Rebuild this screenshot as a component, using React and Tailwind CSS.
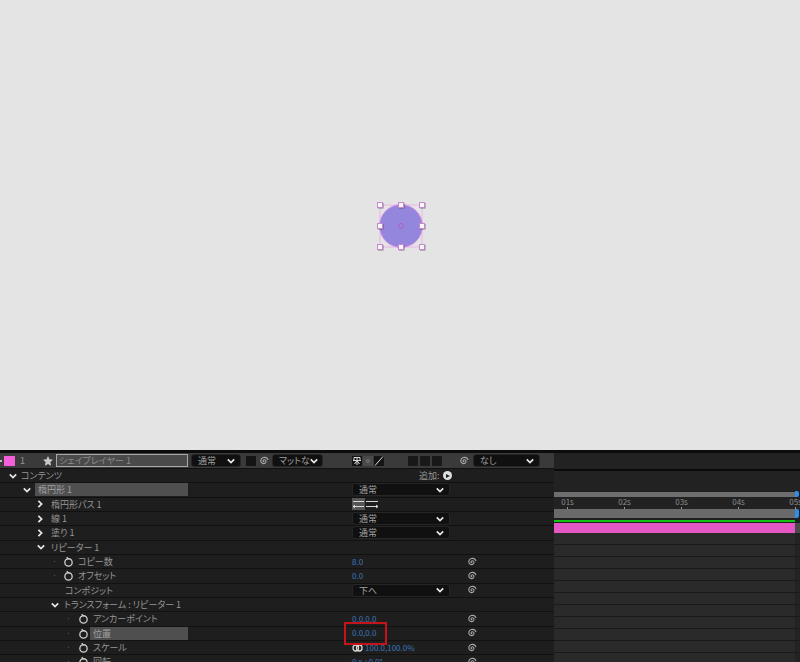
const Chevron = ({ open = true, className = '' }) => (
  <svg className={`w-[8px] h-[8px] shrink-0 ${className}`} viewBox="0 0 10 10" fill="none" stroke="#e6e6e6" strokeWidth="2.2">
    <path d={open ? 'M1 3l4 4 4-4' : 'M3 1l4 4-4 4'} />
  </svg>
);

const Spiral = ({ className = '' }) => (
  <svg className={`w-[10px] h-[10px] shrink-0 ${className}`} viewBox="0 0 12 12" fill="none" stroke="#a8a8a8" strokeWidth="1.3">
    <path d="M6.500 6.800c-1 .4-1.900-.4-1.600-1.300.4-1.100 2-1.300 2.800-.5 1.100 1 .8 2.900-.5 3.700-1.700 1-3.900.3-4.700-1.500-.9-2.200.4-4.600 2.700-5.300 2.300-.7 4.800.6 5.600 2.900" />
  </svg>
);

const Stopwatch = () => (
  <svg className="w-[11px] h-[11px] shrink-0" viewBox="0 0 12 12" fill="none" stroke="#d0d0d0" strokeWidth="1.4">
    <circle cx="6" cy="7" r="4" />
    <path d="M4 1.200l2.400 2.200" />
  </svg>
);

const Dropdown = ({ label, className = '' }) => (
  <div className={`h-[13px] rounded-[3px] bg-[#101010] border border-[#262626] flex items-center justify-between pl-[6px] pr-[5px] text-[#a0a0a0] whitespace-nowrap ${className}`}>
    <span>{label}</span>
    <Chevron />
  </div>
);

const Dot = ({ className = '' }) => <span className={`w-[1px] h-[1px] bg-[#555] shrink-0 ${className}`} />;

const Blue = ({ children }) => <span className="text-[8px] text-[#3a76bc] whitespace-nowrap">{children}</span>;

const Row = ({ name, mid, expr = false }) => (
  <div className="h-[14.33px] flex items-center border-b border-[#111] bg-[#1e1e1e]">
    <div className="w-[352px] shrink-0 flex items-center">{name}</div>
    <div className="w-[115px] shrink-0 flex items-center">{mid}</div>
    {expr && <Spiral />}
  </div>
);

const Label = ({ children, pad }) => (
  <span className={`text-[#969696] whitespace-nowrap ${pad}`}>{children}</span>
);

const Square = () => <span className="w-[10px] h-[10px] bg-[#181818] rounded-[1px]" />;

export default function App() {
  return (
    <div className="w-[800px] h-[662px] overflow-hidden bg-[#1e1e1e] text-[9px] leading-none [font-feature-settings:'palt']" style={{ fontFamily: '"Noto Sans CJK JP", "Liberation Sans", sans-serif' }}>
      {/* composition view */}
      <div className="h-[450px] bg-[#e4e4e4] flex justify-center pt-[199px] pl-[2px]">
        <svg className="w-[54px] h-[54px]" viewBox="0 0 54 54">
          <rect x="6" y="6" width="42" height="42" fill="none" stroke="#eab4ea" strokeWidth="1" />
          <circle cx="27" cy="27" r="21.500" fill="#9486dc" stroke="#dc94e4" strokeWidth="0.8" />
          <path d="M27 24l3 3-3 3-3-3z" fill="none" stroke="#b060b8" strokeWidth="1" />
          {[[6, 6], [27, 6], [48, 6], [6, 27], [48, 27], [6, 48], [27, 48], [48, 48]].map(([x, y]) => (
            <g key={`${x}-${y}`}>
              <rect x={x - 2} y={y - 2} width="5.500" height="5.500" fill="#4a3a4a" opacity="0.6" />
              <rect x={x - 2.5} y={y - 2.500} width="5" height="5" fill="#fbf6fb" stroke="#c48acc" strokeWidth="1" />
            </g>
          ))}
        </svg>
      </div>

      <div className="h-[212px] flex border-t-[3px] border-[#0c0c0c]">
        {/* layer panel */}
        <div className="relative w-[554px] shrink-0 overflow-hidden">
          <div className="h-[16px] bg-[#3a3a3a] flex items-center border-b border-[#111]">
            <span className="w-[2px] h-[2px] bg-[#bbb]" />
            <span className="ml-[2px] w-[11px] h-[10px] bg-[#f35fd8]" />
            <span className="ml-[5px] w-[23px] text-[#969696]">1</span>
            <svg className="w-[10px] h-[10px]" viewBox="0 0 10 10" fill="#c8c8c8">
              <path d="M5 0l1.500 3.300 3.500.4-2.600 2.400.7 3.600L5 7.900 1.900 9.700l.7-3.600L0 3.700l3.500-.4z" />
            </svg>
            <div className="ml-[3px] w-[132px] h-[13px] bg-[#4a4a4a] border border-[#a8a8a8] flex items-center pl-[2px] text-[#8a8a8a] whitespace-nowrap">シェイプレイヤー 1</div>
            <Dropdown label="通常" className="ml-[3px] w-[50px]" />
            <span className="ml-[5px] w-[10px] h-[10px] bg-[#141414]" />
            <Spiral className="ml-[3px]" />
            <Dropdown label="マットな" className="ml-[3px] w-[51px]" />
            <div className="ml-[29px] flex gap-[1px]">
              <svg className="w-[10px] h-[10px] bg-[#141414]" viewBox="0 0 10 10" fill="none" stroke="#d8d8d8" strokeWidth="1">
                <path d="M1 4.500h8M2 4.500V1.500h6v3M5 1.500V9M2.500 8l2.500-3.500L7.500 8" />
              </svg>
              <span className="w-[10px] h-[10px] bg-[#4a4a4a] flex items-center justify-center">
                <span className="w-[4px] h-[4px] rounded-full border border-[#777]" />
              </span>
              <svg className="w-[10px] h-[10px] bg-[#141414]" viewBox="0 0 10 10" fill="none" stroke="#e0e0e0" strokeWidth="1">
                <path d="M1 9.500L9 .5" />
              </svg>
            </div>
            <div className="ml-[24px] flex gap-[2px]">
              <Square />
              <Square />
              <Square />
            </div>
            <Spiral className="ml-[17px]" />
            <Dropdown label="なし" className="ml-[4px] w-[67px]" />
          </div>

          <Row
            name={<><Chevron className="ml-[9px]" /><Label pad="ml-[4px]">コンテンツ</Label></>}
            mid={<span className="ml-[67px] flex items-center gap-[3px] whitespace-nowrap text-[#969696]">追加:<span className="w-[9px] h-[9px] rounded-full bg-[#e0e0e0] flex items-center justify-center"><span className="w-0 h-0 border-y-[2.500px] border-y-transparent border-l-[4px] border-l-[#1e1e1e] ml-[1px]" /></span></span>}
          />
          <Row
            name={<><Chevron className="ml-[23px]" /><div className="ml-[4px] w-[153px] h-[13px] bg-[#4f4f4f] flex items-center pl-[3px] text-[#a0a0a0]">楕円形 1</div></>}
            mid={<Dropdown label="通常" className="w-[98px]" />}
          />
          <Row
            name={<><Chevron open={false} className="ml-[36px]" /><Label pad="ml-[7px]">楕円形パス 1</Label></>}
            mid={
              <div className="flex gap-[1px]">
                <svg className="w-[13px] h-[12px] bg-[#555]" viewBox="0 0 13 12" fill="none" stroke="#d8d8d8" strokeWidth="1">
                  <path d="M1 3.500h11M1 8.500h11" />
                  <path d="M1 8.500l2-1.500M1 8.500l2 1.500" />
                </svg>
                <svg className="w-[12px] h-[12px]" viewBox="0 0 12 12" fill="none" stroke="#d8d8d8" strokeWidth="1">
                  <path d="M0 3.500h12M0 8.500h12" />
                  <path d="M12 8.500l-2-1.500M12 8.500l-2 1.500" />
                </svg>
              </div>
            }
          />
          <Row name={<><Chevron open={false} className="ml-[36px]" /><Label pad="ml-[7px]">線 1</Label></>} mid={<Dropdown label="通常" className="w-[98px]" />} />
          <Row name={<><Chevron open={false} className="ml-[36px]" /><Label pad="ml-[7px]">塗り 1</Label></>} mid={<Dropdown label="通常" className="w-[98px]" />} />
          <Row name={<><Chevron className="ml-[37px]" /><Label pad="ml-[6px]">リピーター 1</Label></>} />
          <Row expr name={<><Dot className="ml-[54px]" /><span className="ml-[8px]"><Stopwatch /></span><Label pad="ml-[4px]">コピー数</Label></>} mid={<Blue>8.0</Blue>} />
          <Row expr name={<><Dot className="ml-[54px]" /><span className="ml-[8px]"><Stopwatch /></span><Label pad="ml-[4px]">オフセット</Label></>} mid={<Blue>0.0</Blue>} />
          <Row expr name={<><Label pad="ml-[65px]">コンポジット</Label></>} mid={<Dropdown label="下へ" className="w-[98px]" />} />
          <Row name={<><Chevron className="ml-[51px]" /><Label pad="ml-[5px]">トランスフォーム : リピーター 1</Label></>} />
          <Row expr name={<><Dot className="ml-[68px]" /><span className="ml-[9px]"><Stopwatch /></span><Label pad="ml-[4px]">アンカーポイント</Label></>} mid={<Blue>0.0,0.0</Blue>} />
          <Row
            expr
            name={<><Dot className="ml-[68px]" /><span className="ml-[9px]"><Stopwatch /></span><div className="ml-[1px] w-[98px] h-[13px] bg-[#4f4f4f] flex items-center pl-[3px] text-[#a0a0a0]">位置</div></>}
            mid={<Blue>0.0,0.0</Blue>}
          />
          <Row
            expr
            name={<><Dot className="ml-[68px]" /><span className="ml-[9px]"><Stopwatch /></span><Label pad="ml-[4px]">スケール</Label></>}
            mid={
              <span className="flex items-center gap-[2px]">
                <svg className="w-[11px] h-[8px]" viewBox="0 0 11 8" fill="none" stroke="#d8d8d8" strokeWidth="1.300">
                  <rect x="1" y="1" width="5.500" height="6" rx="2.700" />
                  <rect x="4.500" y="1" width="5.500" height="6" rx="2.700" />
                </svg>
                <Blue>100.0,100.0%</Blue>
              </span>
            }
          />
          <Row expr name={<><Dot className="ml-[68px]" /><span className="ml-[9px]"><Stopwatch /></span><Label pad="ml-[4px]">回転</Label></>} mid={<Blue>0 x +0.0°</Blue>} />

          {/* red highlight over the position value */}
          <div className="absolute left-[344px] top-[169px] w-[43px] h-[23px] border-[2px] border-[#c4141a]" />
        </div>

        {/* timeline */}
        <div className="flex-1 min-w-0 overflow-hidden bg-[#1f1f1f]">
          <div className="h-[18px] bg-[#222] border-b-2 border-[#0a0a0a]" />
          <div className="h-[20px] bg-[#222]" />
          <div className="flex items-center h-[6px]">
            <div className="w-[241px] h-[5px] bg-[#6e6e6e]" />
            <div className="w-[4px] h-[6px] bg-[#2f8fe8] rounded-r-[2px]" />
          </div>
          <div className="h-[12px] flex ml-[-15px] bg-[#222]">
            {['01s', '02s', '03s', '04s', '05s'].map((t) => (
              <div key={t} className="w-[57px] shrink-0 flex flex-col items-center text-[8px] text-[#8a8a8a]">
                <span className="h-[9px] flex items-center">{t}</span>
                <span className="mt-[1px] w-[1px] h-[2px] bg-[#999]" />
              </div>
            ))}
          </div>
          <div className="flex h-[9px]">
            <div className="w-[241px] bg-[#6a6a6a]" />
            <div className="w-[4px] bg-[#2f8fe8] rounded-r-[2px]" />
          </div>
          <div className="w-[241px] h-[2px] bg-[#11c411] mt-[1.500px]" />
          <div className="flex h-[10.500px] mt-[1px]">
            <div className="w-[241px] bg-[#e457c4]" />
            <div className="flex-1 bg-[#4a4a4a]" />
          </div>
          <div className="flex flex-col">
            {Array.from({ length: 11 }).map((_, i) => (
              <div key={i} className="h-[12px] flex border-b border-[#1a1a1a]">
                <div className="w-[241px] bg-[#2a2a2a]" />
                <div className="flex-1 bg-[#232323]" />
              </div>
            ))}
          </div>
        </div>
      </div>
    </div>
  );
}
